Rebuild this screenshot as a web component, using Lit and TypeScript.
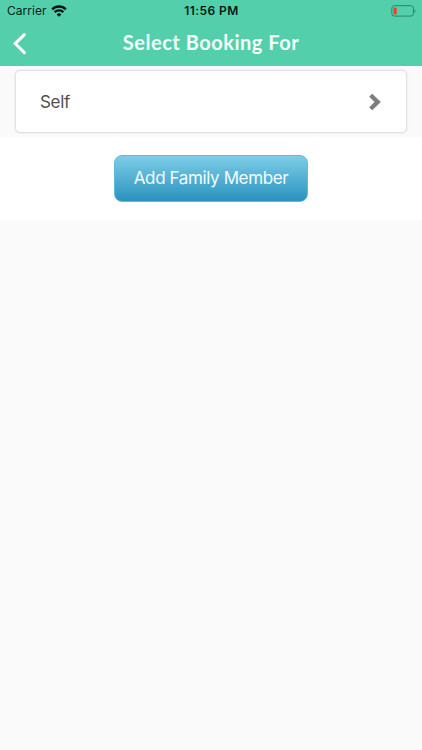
import { LitElement, html, css } from "lit";
import { customElement } from "lit/decorators.js";

@customElement("app-root")
export class AppRoot extends LitElement {
  static styles = css`
    :host {
      display: block;
      height: 100vh;
      overflow: hidden;
      background: #fafafa;
      font-family: Inter, "Liberation Sans", sans-serif;
    }
    svg { display: block; }
    header { background: #53d0ab; height: 66px; }
    .status {
      display: grid;
      grid-template-columns: 1fr auto 1fr;
      align-items: center;
      height: 21px;
      padding: 0 6px 0 7px;
      color: #0b1f19;
    }
    .carrier { display: flex; align-items: center; gap: 4px; font-size: 12px; letter-spacing: 0.03px; }
    .time { font-size: 12px; font-weight: 600; letter-spacing: 0.42px; color: #081813; }
    .battery { justify-self: end; }
    .nav {
      display: grid;
      grid-template-columns: 40px 1fr 40px;
      align-items: center;
      height: 43px;
      color: #fff;
    }
    .back { margin-left: 12px; }
    .title {
      margin: 0;
      padding-bottom: 1px;
      text-align: center;
      font: 700 20px/24px Lato, sans-serif;
      letter-spacing: 0.52px;
      color: #f4fffb;
      white-space: nowrap;
    }
    .list { height: 71px; padding: 4px 15px 0; box-sizing: border-box; }
    .row {
      display: flex;
      align-items: center;
      justify-content: space-between;
      box-sizing: border-box;
      height: 63px;
      padding: 0 25px 0 24px;
      background: #fff;
      border: 1px solid #e2e2e2;
      border-radius: 5px;
      box-shadow: 0 0 2px #dcdcdc;
      color: #505050;
      font-size: 17px;
      letter-spacing: -0.3px;
    }
    .actions {
      display: flex;
      justify-content: center;
      align-items: flex-start;
      box-sizing: border-box;
      height: 83px;
      padding-top: 18px;
      background: #fff;
    }
    button {
      width: 194px;
      height: 47px;
      padding: 0 0 2px;
      border: 1px solid #62bad6;
      border-radius: 8px;
      background: linear-gradient(#7dcde7, #2a93be);
      color: #f2fcff;
      font: 400 17px Inter, "Liberation Sans", sans-serif;
      letter-spacing: -0.38px;
      white-space: nowrap;
    }
  `;

  render() {
    return html`
      <header>
        <div class="status">
          <div class="carrier">
            <span>Carrier</span>
            <svg width="16" height="12" viewBox="0 0 16 12" fill="none" stroke="#06130f" stroke-width="2.4">
              <path d="M1.2 4.3a9.6 9.6 0 0 1 13.6 0" />
              <path d="M3.7 7.2a6 6 0 0 1 8.6 0" />
              <path d="M8 11.7 5.6 9.4a3.3 3.3 0 0 1 4.8 0Z" fill="#06130f" stroke="none" />
            </svg>
          </div>
          <div class="time">11:56 PM</div>
          <svg class="battery" width="25" height="12" viewBox="0 0 25 12">
            <rect x=".8" y=".7" width="21.6" height="10.4" rx="2.6" fill="none" stroke="#32806a" />
            <rect x="2.5" y="2.4" width="3.2" height="7" rx="1" fill="#f03d32" />
            <path d="M23.6 4v4c1.3-.5 1.3-3.5 0-4Z" fill="#32806a" />
          </svg>
        </div>
        <div class="nav">
          <svg class="back" width="16" height="24" viewBox="0 0 16 24" fill="none" stroke="#fff" stroke-width="3" stroke-linecap="round">
            <path d="M12.4 3.6 3.2 12.6l9.2 9" />
          </svg>
          <h1 class="title">Select Booking For</h1>
        </div>
      </header>
      <section class="list">
        <div class="row">
          <span>Self</span>
          <svg width="12" height="18" viewBox="0 0 12 18">
            <path d="M3.2 1 11.5 9l-8.3 8L.5 14.3 5.8 9 .5 3.7Z" fill="#7d7d7d" stroke="#7d7d7d" stroke-width=".6" stroke-linejoin="round" />
          </svg>
        </div>
      </section>
      <section class="actions"><button>Add Family Member</button></section>
    `;
  }
}
